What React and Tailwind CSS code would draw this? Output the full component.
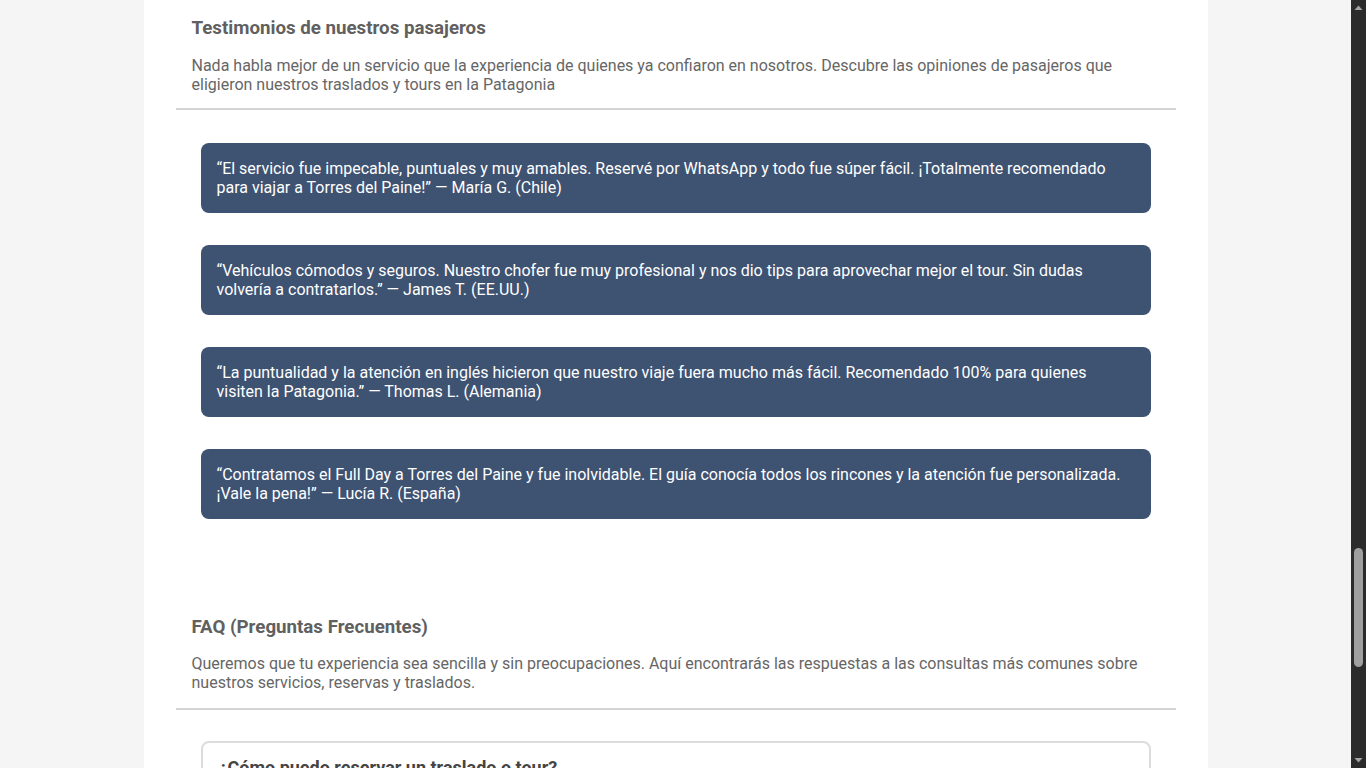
import React from 'react';

const testimonials = [
  '“El servicio fue impecable, puntuales y muy amables. Reservé por WhatsApp y todo fue súper fácil. ¡Totalmente recomendado para viajar a Torres del Paine!” — María G. (Chile)',
  '“Vehículos cómodos y seguros. Nuestro chofer fue muy profesional y nos dio tips para aprovechar mejor el tour. Sin dudas volvería a contratarlos.” — James T. (EE.UU.)',
  '“La puntualidad y la atención en inglés hicieron que nuestro viaje fuera mucho más fácil. Recomendado 100% para quienes visiten la Patagonia.” — Thomas L. (Alemania)',
  '“Contratamos el Full Day a Torres del Paine y fue inolvidable. El guía conocía todos los rincones y la atención fue personalizada. ¡Vale la pena!” — Lucía R. (España)',
];

// Section title + intro text + divider
const SectionHeader = ({ title, paraClass, lineClass, children }) => (
  <div>
    <div className="px-4">
      <h2 className="text-[18.72px] leading-[21px] font-bold text-[#606060]">{title}</h2>
      <p className={`${paraClass} text-[16px] leading-[19px] text-[#666]`}>{children}</p>
    </div>
    <div className={`${lineClass} h-[2px] bg-[#d4d4d4]`} />
  </div>
);

// Fake browser scrollbar, page is shown scrolled down
const Scrollbar = () => (
  <div className="w-[15px] h-full bg-[#2b2b2b] flex flex-col items-center">
    <svg width="15" height="15" viewBox="0 0 15 15" className="shrink-0">
      <path d="M3.5 10 L7.5 5.5 L11.5 10 Z" fill="#a3a3a3" />
    </svg>
    <div className="flex-1 w-full flex justify-center pt-[533px]">
      <div className="w-[9px] h-[119px] rounded-full bg-[#9f9f9f]" />
    </div>
    <svg width="15" height="15" viewBox="0 0 15 15" className="shrink-0">
      <path d="M3.5 5 L7.5 9.5 L11.5 5 Z" fill="#a3a3a3" />
    </svg>
  </div>
);

export default function App() {
  return (
    <div
      className="h-screen w-full flex overflow-hidden bg-[#f5f5f5]"
      style={{ fontFamily: 'Roboto, "Liberation Sans", sans-serif' }}
    >
      <div className="flex-1 overflow-hidden">
        <div className="mx-auto w-[1064px] min-h-full bg-white px-8 pt-[18px]">
          {/* Testimonios */}
          <SectionHeader title="Testimonios de nuestros pasajeros" paraClass="mt-[17px]" lineClass="mt-[14px]">
            Nada habla mejor de un servicio que la experiencia de quienes ya confiaron en nosotros. Descubre las opiniones de pasajeros que eligieron nuestros traslados y tours en la Patagonia
          </SectionHeader>

          <div className="mt-[33px] px-[25px] flex flex-col gap-8">
            {testimonials.map((t, i) => (
              <div key={i} className="bg-[#3e5272] rounded-lg px-4 py-4 text-white text-[16px] leading-[19px]">
                {t}
              </div>
            ))}
          </div>

          {/* FAQ */}
          <div className="mt-[98px]">
            <SectionHeader title="FAQ (Preguntas Frecuentes)" paraClass="mt-[16px]" lineClass="mt-[16px]">
              Queremos que tu experiencia sea sencilla y sin preocupaciones. Aquí encontrarás las respuestas a las consultas más comunes sobre nuestros servicios, reservas y traslados.
            </SectionHeader>
          </div>

          <div className="mt-[31px] px-[25px]">
            <div className="border-2 border-[#dcdcdc] rounded-lg bg-white px-4 pt-[14px] pb-4">
              <h3 className="text-[18px] leading-[21px] font-bold text-[#444]">¿Cómo puedo reservar un traslado o tour?</h3>
              <p className="mt-3 text-[16px] leading-[19px] text-[#666]">
                Puedes reservar directamente por WhatsApp o a través de nuestro formulario de contacto.
              </p>
            </div>
          </div>
        </div>
      </div>
      <Scrollbar />
    </div>
  );
}
